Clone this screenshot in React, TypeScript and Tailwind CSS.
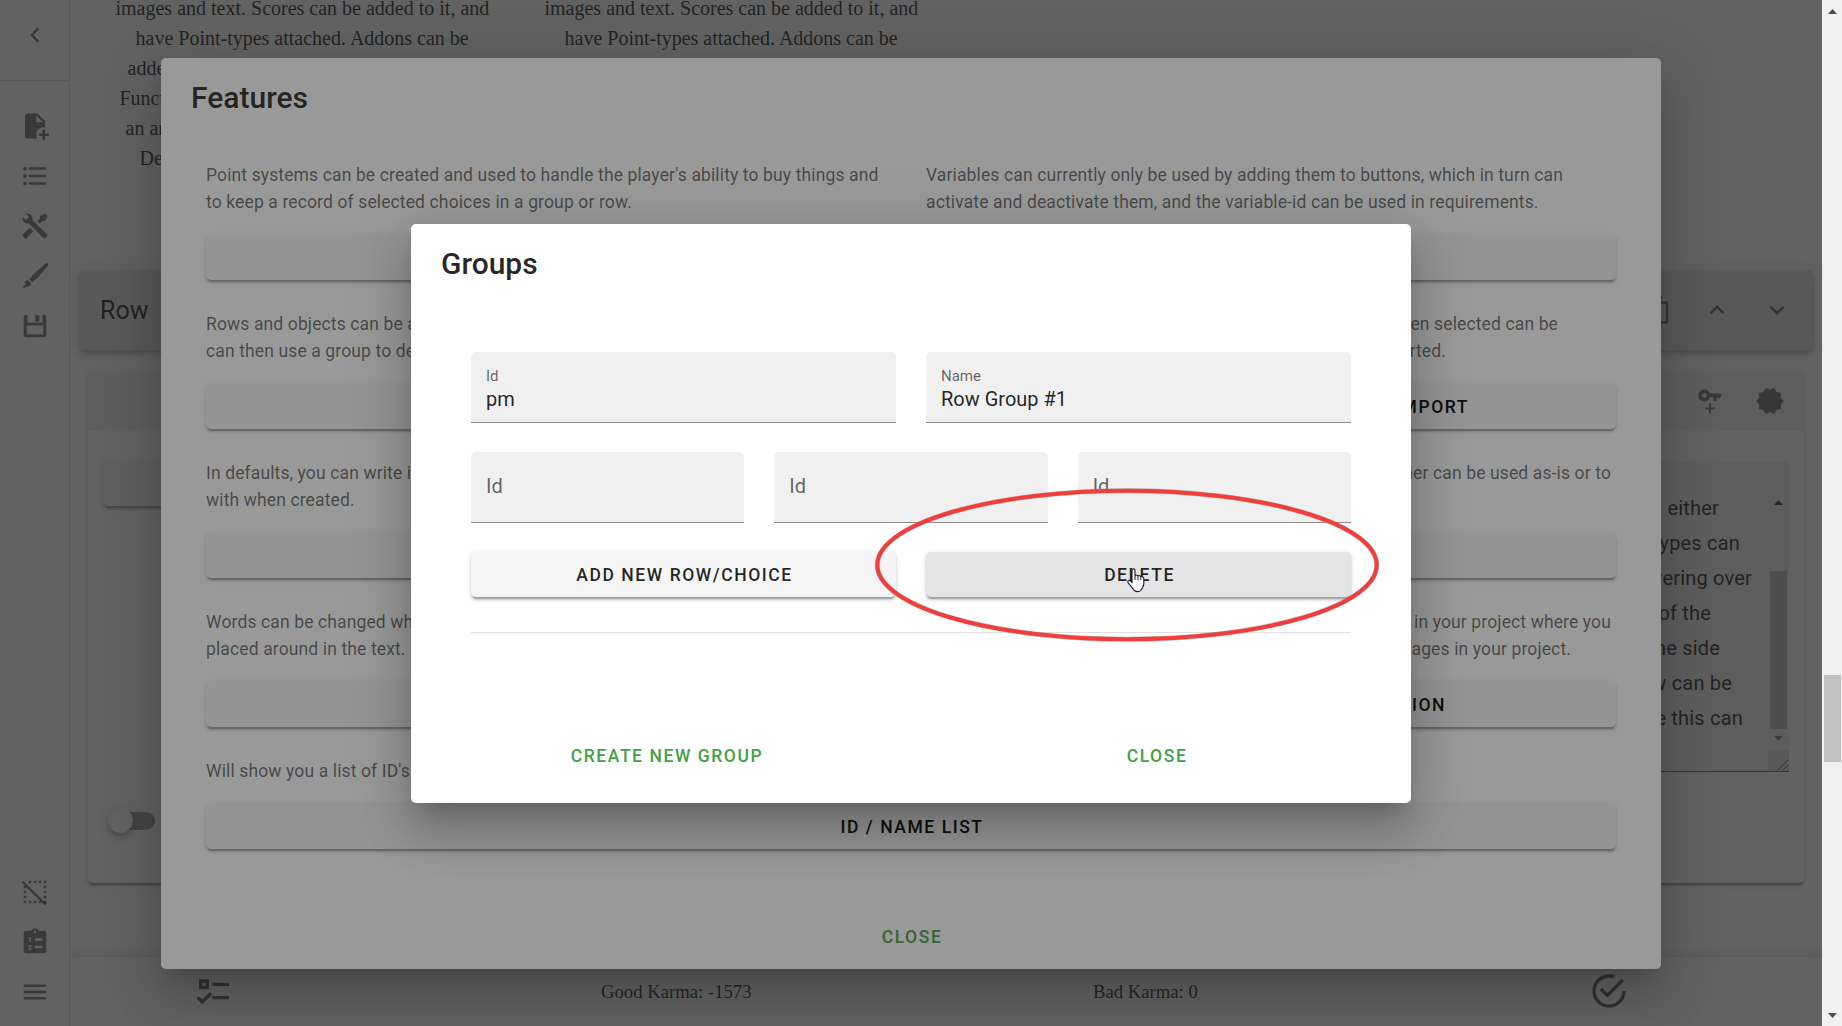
import React from "react";

const RAISED =
  "shadow-[0_3.75px_1.25px_-2.5px_rgba(0,0,0,0.2),0_2.5px_2.5px_0_rgba(0,0,0,0.14),0_1.25px_6.25px_0_rgba(0,0,0,0.12)]";
const DIALOG_SHADOW =
  "shadow-[0_13.75px_18.75px_-8.75px_rgba(0,0,0,0.2),0_30px_47.5px_3.75px_rgba(0,0,0,0.14),0_11.25px_57.5px_10px_rgba(0,0,0,0.12)]";
const BUTTON_TEXT = "text-[17.5px] font-medium tracking-[1.5625px] whitespace-nowrap";

const ICONS = {
  chevronLeft: "M15.41,16.58L10.83,12L15.41,7.41L14,6L8,12L14,18L15.41,16.58Z",
  chevronUp: "M7.41,15.41L12,10.83L16.59,15.41L18,14L12,8L6,14L7.41,15.41Z",
  chevronDown: "M7.41,8.58L12,13.17L16.59,8.58L18,10L12,16L6,10L7.41,8.58Z",
  filePlus:
    "M14 2H6C4.89 2 4 2.89 4 4V20C4 21.11 4.89 22 6 22H13.81C13.28 21.09 13 20.05 13 19C13 15.69 15.69 13 19 13C19.34 13 19.67 13.03 20 13.08V8L14 2M13 9V3.5L18.5 9H13M23 20H20V23H18V20H15V18H18V15H20V18H23V20Z",
  list: "M7,5H21V7H7V5M7,13V11H21V13H7M4,4.5A1.5,1.5 0 0,1 5.5,6A1.5,1.5 0 0,1 4,7.5A1.5,1.5 0 0,1 2.5,6A1.5,1.5 0 0,1 4,4.5M4,10.5A1.5,1.5 0 0,1 5.5,12A1.5,1.5 0 0,1 4,13.5A1.5,1.5 0 0,1 2.5,12A1.5,1.5 0 0,1 4,10.5M7,19V17H21V19H7M4,16.5A1.5,1.5 0 0,1 5.5,18A1.5,1.5 0 0,1 4,19.5A1.5,1.5 0 0,1 2.5,18A1.5,1.5 0 0,1 4,16.5Z",
  tools:
    "M21.71 20.29L20.29 21.71A1 1 0 0 1 18.88 21.71L7 9.85A3.81 3.81 0 0 1 6 10A4 4 0 0 1 2.22 4.7L4.76 7.24L5.29 6.71L6.71 5.29L7.24 4.76L4.7 2.22A4 4 0 0 1 10 6A3.81 3.81 0 0 1 9.85 7L21.71 18.88A1 1 0 0 1 21.71 20.29M2.29 18.88A1 1 0 0 0 2.29 20.29L3.71 21.71A1 1 0 0 0 5.12 21.71L10.59 16.25L7.76 13.42M20 2L16 4V6L13.83 8.17L15.83 10.17L18 8H20L22 4Z",
  brush:
    "M22.2 2C21.5 1.5 20.4 2 19.5 2.8L10.8 10.6L7.4 14.6L9.8 17L13.8 13.6L21.6 4.8C22.5 3.7 22.9 2.5 22.2 2ZM6.4 15.4C4.6 15.2 3.4 16.5 3.3 18L4.8 17.6L4.2 19.2L2.3 20.3C2.4 20.9 3 21.7 3.6 21.6L4.8 20.6C7.2 21 9 19.6 8.9 17.8Z",
  save: "M5 3H6V9.4H18V3H19A2 2 0 0 1 21 5V19A2 2 0 0 1 19 21H5A2 2 0 0 1 3 19V5A2 2 0 0 1 5 3ZM5.4 11.6V18.8H18.6V11.6ZM12.2 3.4H15.4V8.4H12.2Z",
  clipboard:
    "M19 3H14.82C14.4 1.84 13.3 1 12 1C10.7 1 9.6 1.84 9.18 3H5A2 2 0 0 0 3 5V19A2 2 0 0 0 5 21H19A2 2 0 0 0 21 19V5A2 2 0 0 0 19 3M12 3A1 1 0 1 1 12 5A1 1 0 1 1 12 3M12 9H18V11H12ZM12 15H18V17H12Z",
  menu: "M3,6H21V8H3V6M3,11H21V13H3V11M3,16H21V18H3V16Z",
  copy: "M19,21H8V7H19M19,5H8A2,2 0 0,0 6,7V21A2,2 0 0,0 8,23H19A2,2 0 0,0 21,21V7A2,2 0 0,0 19,5M16,1H4A2,2 0 0,0 2,3V17H4V3H16V1Z",
  keyPlus:
    "M7.6 2.8C9.6 2.8 11.3 4.1 12 6H21V9H20V9.8H18.7V9H17.7V12H14.8V9H12A4.8 4.8 0 1 1 7.6 2.8M7.6 5.7A1.9 1.9 0 1 0 7.6 9.5A1.9 1.9 0 1 0 7.6 5.7M11.2 14H12.9V17.1H16V18.8H12.9V22H11.2V18.8H8V17.1H11.2Z",
  decagram:
    "M23,12L20.56,9.22L20.9,5.54L17.29,4.72L15.4,1.54L12,3L8.6,1.54L6.71,4.72L3.1,5.53L3.44,9.21L1,12L3.44,14.78L3.1,18.47L6.71,19.29L8.6,22.47L12,21L15.4,22.46L17.29,19.28L20.9,18.46L20.56,14.78L23,12Z",
  checks:
    "M3,5H9V11H3V5M5,7V9H7V7H5M11,7H21V9H11V7M11,15H21V17H11V15M5,20L1.5,16.5L2.91,15.09L5,17.17L9.59,12.59L11,14L5,20Z",
  checkCircle:
    "M20,12A8,8 0 0,1 12,20A8,8 0 0,1 4,12A8,8 0 0,1 12,4C12.76,4 13.5,4.11 14.2,4.31L15.77,2.74C14.61,2.26 13.34,2 12,2A10,10 0 0,0 2,12A10,10 0 0,0 12,22A10,10 0 0,0 22,12M7.91,10.08L6.5,11.5L11,16L21,6L19.59,4.58L11,13.17L7.91,10.08Z",
};

function Icon({ name, className = "size-[30px]" }: { name: keyof typeof ICONS; className?: string }) {
  return (
    <svg viewBox="0 0 24 24" className={`shrink-0 ${className}`} fill="currentColor" fillRule="evenodd">
      <path d={ICONS[name]} />
    </svg>
  );
}

function SelectOffIcon() {
  const dots = [3, 7, 11, 15, 19];
  return (
    <svg viewBox="0 0 24 24" className="size-[30px] shrink-0" fill="currentColor">
      {dots.slice(1).map((x) => <rect key={`t${x}`} x={x} y="3" width="2" height="2" />)}
      {dots.map((x) => <rect key={`b${x}`} x={x} y="19" width="2" height="2" />)}
      {dots.slice(1, 4).map((y) => <rect key={`l${y}`} x="3" y={y} width="2" height="2" />)}
      {dots.slice(1, 4).map((y) => <rect key={`r${y}`} x="19" y={y} width="2" height="2" />)}
      <path d="M1.9 3.6L20.4 22.1" stroke="currentColor" strokeWidth="1.7" />
    </svg>
  );
}

function NumberedClipboardIcon() {
  return (
    <svg viewBox="0 0 24 24" className="size-[30px] shrink-0">
      <path d={ICONS.clipboard} fill="currentColor" fillRule="evenodd" />
      <text x="6.2" y="12.2" fontSize="6" fontWeight="700" fill="#fff">1</text>
      <text x="6.2" y="18.6" fontSize="6" fontWeight="700" fill="#fff">2</text>
    </svg>
  );
}

function NavItem({ children }: { children: React.ReactNode }) {
  return <div className="flex h-[50px] items-center justify-center">{children}</div>;
}

function Sidebar() {
  return (
    <nav className="flex w-[70px] shrink-0 flex-col border-r border-black/12 text-black/54">
      <div className="flex h-[81px] items-start justify-center border-b border-black/12 pt-5">
        <Icon name="chevronLeft" />
      </div>
      <div className="pt-[19.5px]">
        <NavItem><Icon name="filePlus" /></NavItem>
        <NavItem><Icon name="list" /></NavItem>
        <NavItem><Icon name="tools" /></NavItem>
        <NavItem><Icon name="brush" /></NavItem>
        <NavItem><Icon name="save" /></NavItem>
      </div>
      <div className="mt-auto pb-[9.5px]">
        <NavItem><SelectOffIcon /></NavItem>
        <NavItem><NumberedClipboardIcon /></NavItem>
        <NavItem><Icon name="menu" /></NavItem>
      </div>
    </nav>
  );
}

function EditorText() {
  const lines = [
    { text: "in either", pr: "pr-[49px]" },
    { text: "Point-types can", pr: "pr-[28px]" },
    { text: "hovering over", pr: "pr-[16px]" },
    { text: "of the", pr: "pr-[57px]" },
    { text: "the side", pr: "pr-[48px]" },
    { text: "Row can be", pr: "pr-[36px]" },
    { text: "like this can", pr: "pr-[25px]" },
  ];
  return (
    <div className="mt-[30px] mr-[15px] ml-auto flex h-[311px] w-[500px] rounded-t-[5px] border-b border-black/60 bg-black/6">
      <div className="flex-1 pt-[30px] text-right text-[20px] leading-[35px] tracking-[0.19px]">
        {lines.map((l) => <div key={l.text} className={l.pr}>{l.text}</div>)}
      </div>
      <div className="flex w-[21px] flex-col items-center">
        <svg viewBox="0 0 9 5" className="mt-[39px] h-[5px] w-[9px]"><path d="M0 5L4.5 0L9 5Z" fill="#303030" /></svg>
        <div className="mt-[66px] ml-[2px] h-[158px] w-[17px] self-start bg-[#b9b9b9]" />
        <svg viewBox="0 0 9 5" className="mt-[7px] h-[5px] w-[9px]"><path d="M0 0L4.5 5L9 0Z" fill="#808080" /></svg>
        <svg viewBox="0 0 21 21" className="mt-auto size-[21px] bg-black/7">
          <path d="M10 20L20 10M15 20L20 15" stroke="#555" strokeWidth="1" />
        </svg>
      </div>
    </div>
  );
}

function Page() {
  return (
    <div className="flex h-full flex-1 flex-col overflow-hidden">
      <div className="flex h-[174px] shrink-0 font-['Liberation_Serif',serif] text-[20px] leading-[30px] whitespace-nowrap">
        <div className="w-[429px] pl-[45.5px]">
          <div className="pb-1.5 leading-[17px]">images and text. Scores can be added to it, and</div>
          <div className="pl-[20px]">have Point-types attached. Addons can be</div>
          <div className="pl-3">added</div>
          <div className="pl-1">Functions</div>
          <div className="pl-2.5">an area</div>
          <div className="pl-6">Default</div>
        </div>
        <div className="w-[429px] pl-[45.5px]">
          <div className="pb-1.5 leading-[17px]">images and text. Scores can be added to it, and</div>
          <div className="pl-[20px]">have Point-types attached. Addons can be</div>
        </div>
      </div>
      <div className="mt-24 mr-2.5 ml-2.5 flex h-20 shrink-0 items-center bg-[#e0e0e0] px-5 shadow-[0_2.5px_5px_-1.25px_rgba(0,0,0,0.2),0_5px_6.25px_0_rgba(0,0,0,0.14),0_1.25px_12.5px_0_rgba(0,0,0,0.12)]">
        <div className="flex-1 pt-0.5 text-[25px]">Row</div>
        <div className="flex gap-[30px] text-black/54">
          <Icon name="copy" />
          <Icon name="chevronUp" />
          <Icon name="chevronDown" />
        </div>
      </div>
      <div className={`mx-[18px] mt-[21.5px] flex h-[511.5px] shrink-0 flex-col rounded-[5px] bg-white ${RAISED}`}>
        <div className="flex h-[59.5px] shrink-0 items-center justify-end gap-[29.5px] rounded-t-[5px] bg-[#f0f0f0] pr-[19.5px] pb-px text-black/54">
          <Icon name="keyPlus" />
          <Icon name="decagram" />
        </div>
        <div className="flex flex-1">
          <div className="flex w-[400px] flex-col pl-[15px]">
            <div className={`mt-[30px] h-[45px] rounded-[5px] bg-[#f5f5f5] ${RAISED}`} />
            <div className="mt-[302px] ml-[5px] flex h-[25px] items-center">
              <div className="z-10 size-[25px] rounded-full bg-white shadow-[0_2.5px_5px_-1.25px_rgba(0,0,0,0.2),0_5px_6.25px_0_rgba(0,0,0,0.14),0_1.25px_12.5px_0_rgba(0,0,0,0.12)]" />
              <div className="-ml-[23px] h-[18px] w-[45px] rounded-full bg-black/38" />
            </div>
          </div>
          <EditorText />
        </div>
      </div>
      <div className="mt-auto flex h-[69.5px] shrink-0 items-center bg-white pl-[124px] font-['Liberation_Serif',serif] text-[18.7px] shadow-[0_0_10px_rgba(0,0,0,0.2)]">
        <Icon name="checks" className="size-10 text-black/66" />
        <span className="w-[491px] pt-0.5 pl-[367px] whitespace-nowrap">Good Karma: -1573</span>
        <span className="w-[864px] pt-0.5 pl-[368px] whitespace-nowrap">Bad Karma: 0</span>
        <Icon name="checkCircle" className="size-10 text-black/66" />
      </div>
    </div>
  );
}

function RaisedButton({ label, className = "justify-center" }: { label: string; className?: string }) {
  return (
    <div className={`flex h-[45px] items-center rounded-[5px] bg-[#f5f5f5] pt-0.5 pl-0.5 text-black ${BUTTON_TEXT} ${RAISED} ${className}`}>
      {label}
    </div>
  );
}

type Line = { text: string; pr?: string };

function Feature({ lines, label = "", align }: { lines: Line[]; label?: string; align?: string }) {
  return (
    <div className="flex h-[119px] flex-col justify-between">
      <div className="pt-px text-[17.5px] leading-[27px] tracking-[0.125px] whitespace-nowrap text-black/60">
        {lines.map((l) => (
          <div key={l.text} className={l.pr ? `text-right ${l.pr}` : ""}>{l.text}</div>
        ))}
      </div>
      <RaisedButton label={label} className={align} />
    </div>
  );
}

function FeaturesDialog() {
  return (
    <section className={`h-[911px] w-[1500px] rounded-[5px] bg-white px-[30px] ${DIALOG_SHADOW}`}>
      <h2 className="h-[103px] pt-5 text-[30px] leading-10 font-medium">Features</h2>
      <div className="grid grid-cols-2 gap-[30px] px-[15px]">
        <Feature
          lines={[
            { text: "Point systems can be created and used to handle the player's ability to buy things and" },
            { text: "to keep a record of selected choices in a group or row." },
          ]}
        />
        <Feature
          lines={[
            { text: "Variables can currently only be used by adding them to buttons, which in turn can" },
            { text: "activate and deactivate them, and the variable-id can be used in requirements." },
          ]}
        />
        <Feature lines={[{ text: "Rows and objects can be added" }, { text: "can then use a group to decide" }]} />
        <Feature
          lines={[{ text: "when selected can be", pr: "pr-[58px]" }, { text: "imported.", pr: "pr-[170px]" }]}
          label="IMPORT"
          align="justify-end pr-[147px]"
        />
        <Feature lines={[{ text: "In defaults, you can write in" }, { text: "with when created." }]} />
        <Feature lines={[{ text: "either can be used as-is or to", pr: "pr-[5px]" }]} />
        <Feature lines={[{ text: "Words can be changed when" }, { text: "placed around in the text." }]} />
        <Feature
          lines={[{ text: "in your project where you", pr: "pr-[5px]" }, { text: "images in your project.", pr: "pr-[45px]" }]}
          label="ION"
          align="justify-end pr-[170px]"
        />
      </div>
      <div className="mt-[30px] px-[15px]">
        <p className="mb-[18.5px] pt-px text-[17.5px] leading-[27px] tracking-[0.125px] text-black/60">Will show you a list of ID's</p>
        <RaisedButton label="ID / NAME LIST" />
      </div>
      <div className={`mt-[75px] pl-0.5 text-center leading-[27px] text-[#43a047] ${BUTTON_TEXT}`}>CLOSE</div>
    </section>
  );
}

function Field({ label, value }: { label: string; value?: string }) {
  return (
    <div className="flex h-[71px] flex-1 flex-col justify-center rounded-t-[5px] border-b border-black/42 bg-[#f0f0f0] px-[15px]">
      {value ? (
        <>
          <span className="mt-[5px] text-[15px] leading-5 text-black/60">{label}</span>
          <span className="text-[20px] leading-[27px]">{value}</span>
        </>
      ) : (
        <span className="-mt-0.5 text-[20px] leading-6 text-black/60">{label}</span>
      )}
    </div>
  );
}

function GroupsDialog() {
  return (
    <section className={`flex h-[579px] w-[1000px] flex-col rounded-[5px] bg-white ${DIALOG_SHADOW}`}>
      <h2 className="h-32 px-[30px] pt-5 text-[30px] leading-10 font-medium">Groups</h2>
      <div className="flex gap-[30px] px-[60px]">
        <Field label="Id" value="pm" />
        <Field label="Name" value="Row Group #1" />
      </div>
      <div className="mt-[29px] flex gap-[30px] px-[60px]">
        <Field label="Id" />
        <Field label="Id" />
        <Field label="Id" />
      </div>
      <div className="mt-[29px] grid grid-cols-2 gap-[30px] px-[60px]">
        <div className={`flex h-[45px] items-center justify-center rounded-[5px] bg-[#f5f5f5] pt-0.5 pl-0.5 ${BUTTON_TEXT} ${RAISED}`}>ADD NEW ROW/CHOICE</div>
        <div className={`flex h-[45px] items-center justify-center rounded-[5px] bg-[#e4e4e4] pt-0.5 pl-0.5 ${BUTTON_TEXT} ${RAISED}`}>DELETE</div>
      </div>
      <div className="mx-[60px] mt-[35px] h-px bg-black/12" />
      <div className={`mx-2.5 mt-[110px] grid grid-cols-2 text-center leading-[27px] text-[#43a047] ${BUTTON_TEXT}`}>
        <span className="pl-0.5">CREATE NEW GROUP</span>
        <span className="pl-0.5">CLOSE</span>
      </div>
    </section>
  );
}

function WindowScrollbar() {
  return (
    <div className="flex h-full w-5 shrink-0 flex-col items-center bg-[#f1f1f1]">
      <svg viewBox="0 0 9 5" className="mt-[9px] h-[5px] w-[9px]"><path d="M0 5L4.5 0L9 5Z" fill="#505050" /></svg>
      <div className="mt-[661px] ml-px h-[87px] w-[17px] bg-[#c1c1c1]" />
      <svg viewBox="0 0 9 5" className="mt-auto mb-2 h-[5px] w-[9px]"><path d="M0 0L4.5 5L9 0Z" fill="#505050" /></svg>
    </div>
  );
}

export default function App() {
  return (
    <div className="flex h-[1026px] w-[1842px] overflow-hidden bg-white font-[Roboto,sans-serif] text-black/87">
      <div className="relative flex h-full w-[1822px] overflow-hidden">
        <Sidebar />
        <Page />
        <div className="absolute inset-0 z-20 flex items-center justify-center bg-[#212121]/46 pt-px">
          <FeaturesDialog />
        </div>
        <div className="absolute inset-0 z-30 flex items-center justify-center bg-[#212121]/46 pt-px">
          <GroupsDialog />
        </div>
        <svg viewBox="0 0 508 156" className="absolute top-[487px] left-[873px] z-40 h-[156px] w-[508px]" fill="none">
          <ellipse cx="254" cy="78" rx="249.7" ry="74.2" stroke="#8a8a8a" strokeWidth="5" opacity="0.5" />
          <ellipse cx="254" cy="78" rx="249.7" ry="74.2" stroke="#f23d3d" strokeWidth="4" />
        </svg>
        <svg viewBox="0 0 18 25" className="absolute top-[568px] left-[1127px] z-50 h-[25px] w-[18px]">
          <path
            d="M5 2.5C5 .3 8 .3 8 2.5V8C8 6.6 10.8 6.6 10.9 8.4C11 7.2 13.6 7.2 13.8 9.2C14 8.2 16.8 8.4 16.8 10.4V15.5C16.8 18.6 15.2 20.6 13.6 22.6C12 24 8.6 24 7 22.2C4.8 19.4 3.4 17.2 1.2 14.8C-.2 13 2.2 11.6 3.6 13L5 14.4Z"
            fill="#fff"
            stroke="#1a1a2a"
            strokeWidth="1.1"
          />
          <path d="M8 8V12M10.9 8.4V12M13.8 9.2V12" stroke="#1a1a2a" strokeWidth="1" />
        </svg>
      </div>
      <WindowScrollbar />
    </div>
  );
}
